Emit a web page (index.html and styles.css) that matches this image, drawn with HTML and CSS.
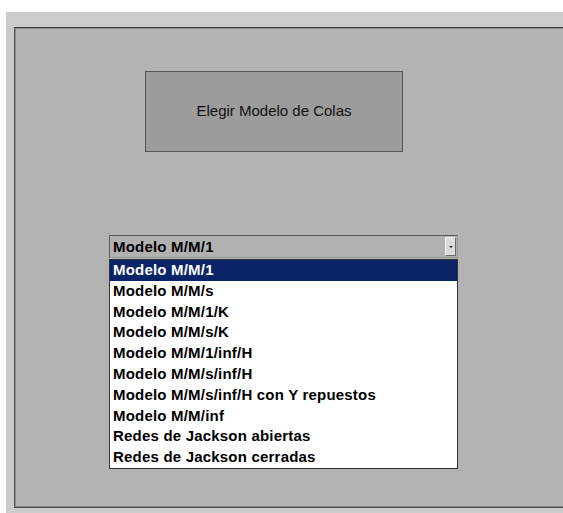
FILE: index.html
```html
<!DOCTYPE html>
<html lang="es">
<head>
<meta charset="utf-8">
<title>Modelos de Colas</title>
<link rel="stylesheet" href="styles.css">
</head>
<body>
<div class="frame">
  <div class="panel">
    <div class="title-box">Elegir Modelo de Colas</div>
    <div class="combo">
      <div class="combo-field">
        <span class="combo-value">Modelo M/M/1</span>
        <span class="combo-arrow"><span class="arrow-mark"></span></span>
      </div>
      <ul class="combo-list">
        <li class="item selected">Modelo M/M/1</li>
        <li class="item">Modelo M/M/s</li>
        <li class="item">Modelo M/M/1/K</li>
        <li class="item">Modelo M/M/s/K</li>
        <li class="item">Modelo M/M/1/inf/H</li>
        <li class="item">Modelo M/M/s/inf/H</li>
        <li class="item">Modelo M/M/s/inf/H con Y repuestos</li>
        <li class="item">Modelo M/M/inf</li>
        <li class="item">Redes de Jackson abiertas</li>
        <li class="item">Redes de Jackson cerradas</li>
      </ul>
    </div>
  </div>
</div>
</body>
</html>
```
FILE: styles.css
```css
html, body {
  margin: 0;
  padding: 0;
  background: #ffffff;
  overflow: hidden;
  font-family: "Liberation Sans", Arial, sans-serif;
}

/* outer window area */
.frame {
  margin: 12px 0 0 6px;
  height: 501px;
  background: #cbcbcb;
  padding: 15px 0 0 8px;
  box-sizing: border-box;
}

/* sunken content panel, open on the right side */
.panel {
  height: 481px;
  box-sizing: border-box;
  background: #b3b3b3;
  border-top: 1px solid #3a3a3a;
  border-left: 1px solid #555555;
  border-bottom: 1px solid #4a4a4a;
  box-shadow: inset 1px 1px 0 #8c8c8c, inset 0 -1px 0 #8c8c8c;
  padding-top: 43px;
  display: flex;
  flex-direction: column;
  align-items: flex-start;
}

.title-box {
  margin-left: 130px;
  width: 258px;
  height: 81px;
  box-sizing: border-box;
  border: 1px solid #555555;
  background: #9c9c9c;
  display: flex;
  align-items: center;
  justify-content: center;
  font-size: 15px;
  color: #111111;
  padding-bottom: 2px;
}

.combo {
  margin-left: 94px;
  margin-top: 83px;
  width: 349px;
  display: flex;
  flex-direction: column;
}

.combo-field {
  height: 23px;
  box-sizing: border-box;
  border: 1px solid #5a5a5a;
  border-right-color: #9a9a9a;
  border-bottom-color: #9a9a9a;
  background: #b1b1b1;
  display: flex;
  align-items: center;
  justify-content: space-between;
  padding-left: 3px;
}

.combo-value {
  font-weight: bold;
  font-size: 15px;
  color: #000000;
  letter-spacing: 0.2px;
}

.combo-arrow {
  width: 11px;
  height: 19px;
  margin-right: 1px;
  box-sizing: border-box;
  background: #dcdcdc;
  border: 1px solid #f2f2f2;
  border-right-color: #6a6a6a;
  border-bottom-color: #6a6a6a;
  display: flex;
  align-items: center;
  justify-content: center;
}

.arrow-mark {
  width: 0;
  height: 0;
  border-left: 2px solid transparent;
  border-right: 2px solid transparent;
  border-top: 2px solid #222222;
}

.combo-list {
  list-style: none;
  margin: 1px 0 0 0;
  padding: 0;
  background: #ffffff;
  border: 1px solid #333333;
}

.item {
  height: 20.8px;
  line-height: 20.8px;
  padding-left: 3px;
  font-weight: bold;
  font-size: 15px;
  color: #000000;
  letter-spacing: 0.2px;
  white-space: nowrap;
}

.item.selected {
  background: #0a246a;
  color: #ffffff;
}
```
